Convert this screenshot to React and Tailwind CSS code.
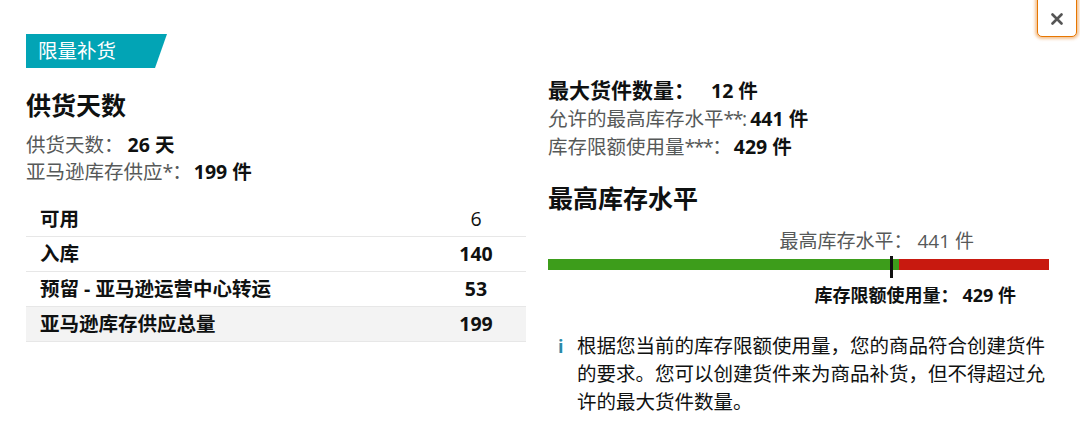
import React from 'react';

const rows = [
  { label: '可用', value: '6', bold: false },
  { label: '入库', value: '140', bold: true },
  { label: '预留 - 亚马逊运营中心转运', value: '53', bold: true },
  { label: '亚马逊库存供应总量', value: '199', bold: true, total: true },
];

const font = { fontFamily: '"Open Sans", "Noto Sans CJK SC", sans-serif' };

export default function App() {
  return (
    <div className="relative w-[1080px] h-[423px] overflow-hidden bg-white text-[#0f1111]" style={font}>
      {/* close button */}
      <button className="absolute right-[3px] top-[-6px] w-[40px] h-[43px] bg-white border border-[#e77600] rounded-[5px] shadow-[0_0_3px_2px_rgba(228,121,17,0.45)] flex items-center justify-center pt-[6px]">
        <svg width="12" height="12" viewBox="0 0 12 12">
          <path d="M1.5 1.5 L10.5 10.5 M10.5 1.5 L1.5 10.5" stroke="#555" strokeWidth="2.6" strokeLinecap="round" />
        </svg>
      </button>

      <div className="flex pl-[26px]">
        {/* left column */}
        <div className="w-[500px] pt-[34px]">
          <div
            className="h-[34px] w-[141px] bg-[#02a4b5] text-white text-[19.5px] leading-[34px] pl-[12px]"
            style={{ clipPath: 'polygon(0 0, 100% 0, 91.5% 100%, 0 100%)' }}
          >
            限量补货
          </div>
          <h2 className="mt-[21px] text-[25px] leading-[32px] font-bold">供货天数</h2>
          <div className="mt-[10px] text-[19.5px] leading-[27px]">
            <div>
              <span className="text-[#565959]">供货天数：</span>
              <span className="font-bold ml-[4px]">26 天</span>
            </div>
            <div>
              <span className="text-[#565959]">亚马逊库存供应<span className="tracking-[-1px]">*</span>：</span>
              <span className="font-bold ml-[2px]">199 件</span>
            </div>
          </div>
          <div className="mt-[16px] border-b border-[#e7e7e7]">
            {rows.map((r, i) => (
              <div
                key={r.label}
                className={`flex items-center h-[35px] text-[19.5px] ${i > 0 ? 'border-t border-[#e7e7e7]' : ''} ${r.total ? 'bg-[#f3f3f3]' : ''}`}
              >
                <div className="flex-1 pl-[14px] font-bold">{r.label}</div>
                <div className={`w-[100px] text-center ${r.bold ? 'font-bold' : ''}`}>{r.value}</div>
              </div>
            ))}
          </div>
        </div>

        {/* right column */}
        <div className="ml-[22px] w-[501px] pt-[76px]">
          <div className="text-[21px] leading-[28px] font-bold">
            最大货件数量：<span className="ml-[16px] text-[19.5px]">12 件</span>
          </div>
          <div className="text-[19.5px] leading-[28px]">
            <span className="text-[#565959]">允许的最高库存水平<span className="tracking-[-1.5px]">**</span>:</span>
            <span className="font-bold ml-[3px]">441 件</span>
          </div>
          <div className="text-[19.5px] leading-[28px]">
            <span className="text-[#565959]">库存限额使用量<span className="tracking-[-1.5px]">***</span>：</span>
            <span className="font-bold ml-[2px]">429 件</span>
          </div>
          <h2 className="mt-[21px] text-[25px] leading-[32px] font-bold">最高库存水平</h2>

          <div className="mt-[14px] flex justify-end pr-[75px] text-[19px] leading-[27px] text-[#565959]">
            最高库存水平： 441 件
          </div>
          <div className="relative mt-[4px]">
            <div className="flex h-[11px]">
              <div className="w-[70%] bg-[#3d9d1b]" />
              <div className="flex-1 bg-[#c8190f]" />
            </div>
            <div className="absolute left-[68.3%] top-[-3px] w-[3px] h-[22px] bg-[#111]" />
          </div>
          <div className="mt-[12px] flex justify-end pr-[33px] text-[18px] leading-[27px] font-bold">
            库存限额使用量：<span className="ml-[4px]">429 件</span>
          </div>

          <div className="mt-[23px] flex pl-[10px]">
            <span className="w-[19px] text-[18px] leading-[28px] font-bold text-[#2a8aa8]">i</span>
            <p className="flex-1 text-[19.5px] leading-[28px]">
              根据您当前的库存限额使用量，您的商品符合创建货件的要求。您可以创建货件来为商品补货，但不得超过允许的最大货件数量。
            </p>
          </div>
        </div>
      </div>
    </div>
  );
}
